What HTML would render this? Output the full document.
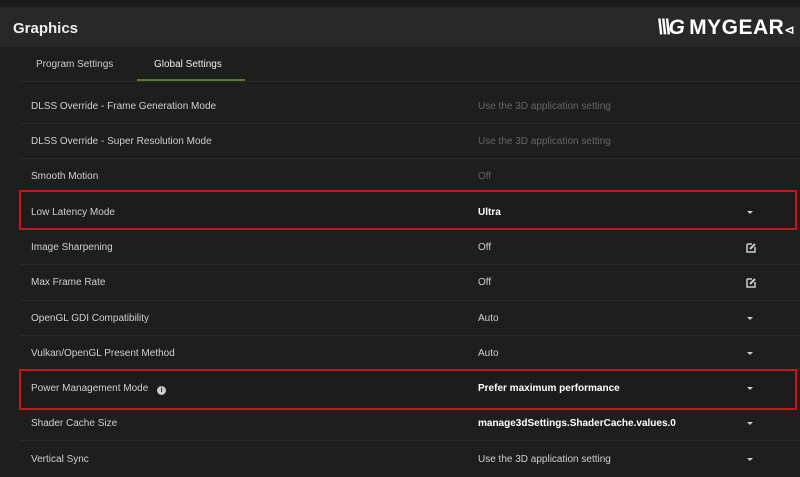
<!DOCTYPE html><html><head><style>
body{margin:0;width:800px;height:474px;background:#1e1e1e;overflow:hidden;font-family:"Liberation Sans",sans-serif;position:relative}
.top{position:absolute;left:0;top:0;width:800px;height:7px;background:#1a1a1a}
.hdr{position:absolute;left:0;top:7px;width:800px;height:40px;background:#282828}
.hdr .t{position:absolute;left:13px;top:13px;color:#eee;font-size:15px;font-weight:bold}
.logo{position:absolute;left:657px;top:9px;color:#fff;font-weight:bold;font-size:21px;letter-spacing:0.5px}
.tab{position:absolute;top:59px;font-size:10px;color:#ccc}
.ul{position:absolute;left:137px;top:79px;width:108px;height:2px;background:#5a7a2a}
.sep{position:absolute;left:20px;width:780px;height:1px;background:#2a2a2a}
.row{position:absolute;left:0;width:800px;height:35px;font-size:10px;line-height:35px;color:#cfcfcf}
.row .l{position:absolute;left:31px}
.row .v{position:absolute;left:478px}
.row .v.d{color:#666}
.row .v.b{color:#fff;font-weight:bold}
.car{position:absolute;left:747px;top:16px;width:0;height:0;border-left:3px solid transparent;border-right:3px solid transparent;border-top:3px solid #ccc}
.ed{position:absolute;left:746px;top:12px}
.box{position:absolute;border:2px solid #c8141a;box-sizing:border-box;left:19px;width:778px;background:#1c1c1c}
</style></head><body>
<div class="top"></div>
<div class="hdr"><div class="t">Graphics</div>
<div class="logo"><span style="font-style:italic;letter-spacing:-2px">\\\G</span> MYGEAR<span style="font-size:12px">⊲</span></div></div>
<div class="tab" style="left:36px">Program Settings</div>
<div class="tab" style="left:154px;color:#eee">Global Settings</div>
<div class="sep" style="top:81px"></div>
<div class="ul"></div>
<div class="box" style="top:190px;height:40px"></div>
<div class="box" style="top:369px;height:41px"></div>
<div class="row" style="top:89px"><span class="l">DLSS Override - Frame Generation Mode</span><span class="v d">Use the 3D application setting</span></div>
<div class="sep" style="top:123px"></div>
<div class="row" style="top:124px"><span class="l">DLSS Override - Super Resolution Mode</span><span class="v d">Use the 3D application setting</span></div>
<div class="sep" style="top:158px"></div>
<div class="row" style="top:159px"><span class="l">Smooth Motion</span><span class="v d">Off</span></div>
<div class="row" style="top:195px"><span class="l">Low Latency Mode</span><span class="v b">Ultra</span><span class="car"></span></div>
<div class="row" style="top:230px"><span class="l">Image Sharpening</span><span class="v">Off</span><svg class="ed" width="11" height="11" viewBox="0 0 11 11"><path d="M1 2h5M1 2v8h8V5" stroke="#ccc" stroke-width="1.5" fill="none"/><path d="M4 7l5-5" stroke="#ccc" stroke-width="2"/></svg></div>
<div class="sep" style="top:264px"></div>
<div class="row" style="top:265px"><span class="l">Max Frame Rate</span><span class="v">Off</span><svg class="ed" width="11" height="11" viewBox="0 0 11 11"><path d="M1 2h5M1 2v8h8V5" stroke="#ccc" stroke-width="1.5" fill="none"/><path d="M4 7l5-5" stroke="#ccc" stroke-width="2"/></svg></div>
<div class="sep" style="top:300px"></div>
<div class="row" style="top:301px"><span class="l">OpenGL GDI Compatibility</span><span class="v">Auto</span><span class="car"></span></div>
<div class="sep" style="top:335px"></div>
<div class="row" style="top:336px"><span class="l">Vulkan/OpenGL Present Method</span><span class="v">Auto</span><span class="car"></span></div>
<div class="row" style="top:371px"><span class="l">Power Management Mode <span style="display:inline-block;width:9px;height:9px;border-radius:50%;background:#ccc;color:#222;font-size:7px;line-height:9px;text-align:center;margin-left:6px;font-weight:bold;vertical-align:-1px">i</span></span><span class="v b">Prefer maximum performance</span><span class="car"></span></div>
<div class="row" style="top:406px"><span class="l">Shader Cache Size</span><span class="v b">manage3dSettings.ShaderCache.values.0</span><span class="car"></span></div>
<div class="sep" style="top:440px"></div>
<div class="row" style="top:442px"><span class="l">Vertical Sync</span><span class="v">Use the 3D application setting</span><span class="car"></span></div>
</body></html>
